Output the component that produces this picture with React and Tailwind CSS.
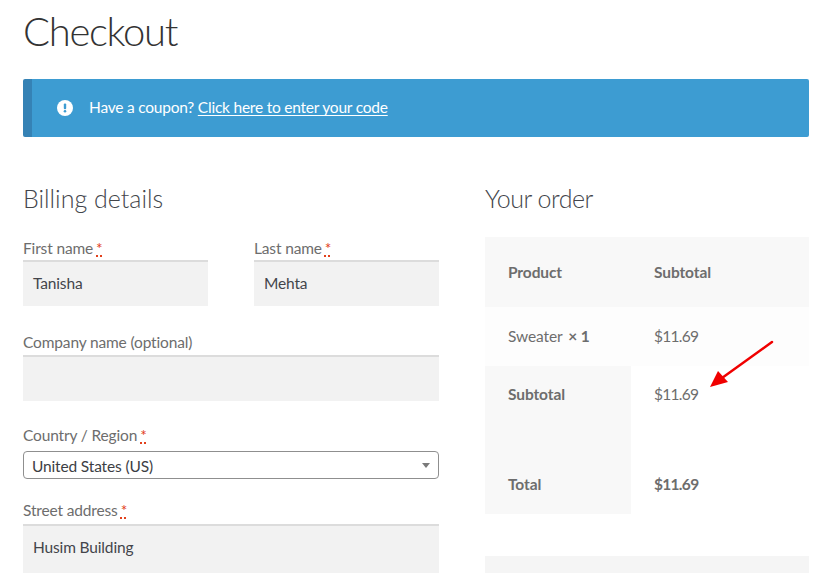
// Checkout page
const Required = () => (
  <abbr className="ml-[3px] text-[#e2401c] underline decoration-dotted decoration-2 underline-offset-[1px]">*</abbr>
);

const Field = ({ label, required, value, className = '', h = 'h-[46px]', labelLeading = 'leading-[24px]' }) => (
  <div className={className}>
    <label className={`block h-[24px] text-[15.5px] ${labelLeading} tracking-[-0.15px] text-[#6d6d6d]`}>
      {label}
      {required && <Required />}
    </label>
    <div className={`${h} bg-[#f2f2f2] border-t-2 border-[#dcdcdc] px-[10px] text-[15.5px] leading-[43px] tracking-[-0.15px] text-[#43454b]`}>
      {value}
    </div>
  </div>
);

const App = () => {
  return (
    <div className='font-["Lato","Noto_Sans",sans-serif] relative w-[834px] h-[573px] overflow-hidden bg-white pl-[23px] pr-[25px]'>
      <h1 className="h-[79px] pt-[5px] text-[40px] leading-[52px] tracking-[-1.3px] font-light text-[#333333]">Checkout</h1>

      <div className="flex items-center h-[58px] bg-[#3d9cd2] border-l-[9px] border-[#3582b5] rounded-[2px] pl-[25px] text-[15.5px] tracking-[-0.22px] text-white">
        <svg className="w-[16px] h-[16px] mr-[16px]" viewBox="0 0 16 16">
          <circle cx="8" cy="8" r="8" fill="#fff" />
          <rect x="6.8" y="3.4" width="2.4" height="5.8" rx="1" fill="#3d9cd2" />
          <circle cx="8" cy="11.3" r="1.3" fill="#3d9cd2" />
        </svg>
        <span>
          Have a coupon? <a className="underline underline-offset-2">Click here to enter your code</a>
        </span>
      </div>

      <div className="flex gap-[46px] mt-[43px]">
        <div className="w-[416px] shrink-0">
          <h3 className="h-[41px] text-[25px] leading-[36px] font-light text-[#43454b]">Billing details</h3>
          <div className="flex gap-[46px] mt-[15px]">
            <Field className="w-[185px]" label="First name" required value="Tanisha" />
            <Field className="w-[185px]" label="Last name" required value="Mehta" />
          </div>
          <Field className="mt-[25px]" labelLeading="leading-[22px]" label="Company name (optional)" />

          <label className="block mt-[23px] h-[27px] text-[15.5px] leading-[22px] tracking-[-0.15px] text-[#6d6d6d]">
            Country / Region
            <Required />
          </label>
          <div className="flex items-center justify-between h-[28px] border border-[#8f8f8f] rounded-[4px] px-[8px] text-[15.5px] tracking-[-0.15px] text-[#3c3e44]">
            <span className="pt-[4px]">United States (US)</span>
            <span className="w-0 h-0 border-x-[4px] border-x-transparent border-t-[5px] border-t-[#7a7a7a]" />
          </div>

          <Field className="mt-[21px]" h="h-[49px]" labelLeading="leading-[20px]" label="Street address" required value="Husim Building" />
        </div>

        <div className="w-[324px] shrink-0">
          <h3 className="h-[41px] text-[25px] leading-[36px] tracking-[-0.5px] font-light text-[#43454b]">Your order</h3>
          <div className="mt-[16px] text-[15.5px] tracking-[-0.1px] text-[#6d6d6d]">
            <div className="flex items-center h-[70px] pt-[2px] bg-[#f8f8f8] font-bold">
              <div className="w-[146px] pl-[23px]">Product</div>
              <div className="pl-[23px]">Subtotal</div>
            </div>
            <div className="flex items-center h-[59px] bg-[#fdfdfd]">
              <div className="w-[146px] pl-[23px]">
                Sweater <b className="ml-[2px]">× 1</b>
              </div>
              <div className="pl-[23px] tracking-[-0.7px]">$11.69</div>
            </div>
            <div className="flex h-[148px]">
              <div className="w-[146px] bg-[#f8f8f8] pl-[23px] font-bold">
                <div className="pt-[17px] h-[90px]">Subtotal</div>
                <div className="pt-[17px]">Total</div>
              </div>
              <div className="pl-[23px] tracking-[-0.7px]">
                <div className="pt-[17px] h-[90px]">$11.69</div>
                <div className="pt-[17px] font-bold">$11.69</div>
              </div>
            </div>
          </div>
          <div className="mt-[42px] h-[40px] bg-[#f5f5f5]" />
        </div>
      </div>

      {/* red annotation arrow */}
      <svg className="absolute left-[700px] top-[335px] w-[80px] h-[60px]" viewBox="0 0 80 60">
        <line x1="72" y1="7" x2="22" y2="43" stroke="#f00000" strokeWidth="2.5" strokeLinecap="round" />
        <polygon points="10,52 18,36 28,47" fill="#f00000" />
      </svg>
    </div>
  );
};

export default App;
